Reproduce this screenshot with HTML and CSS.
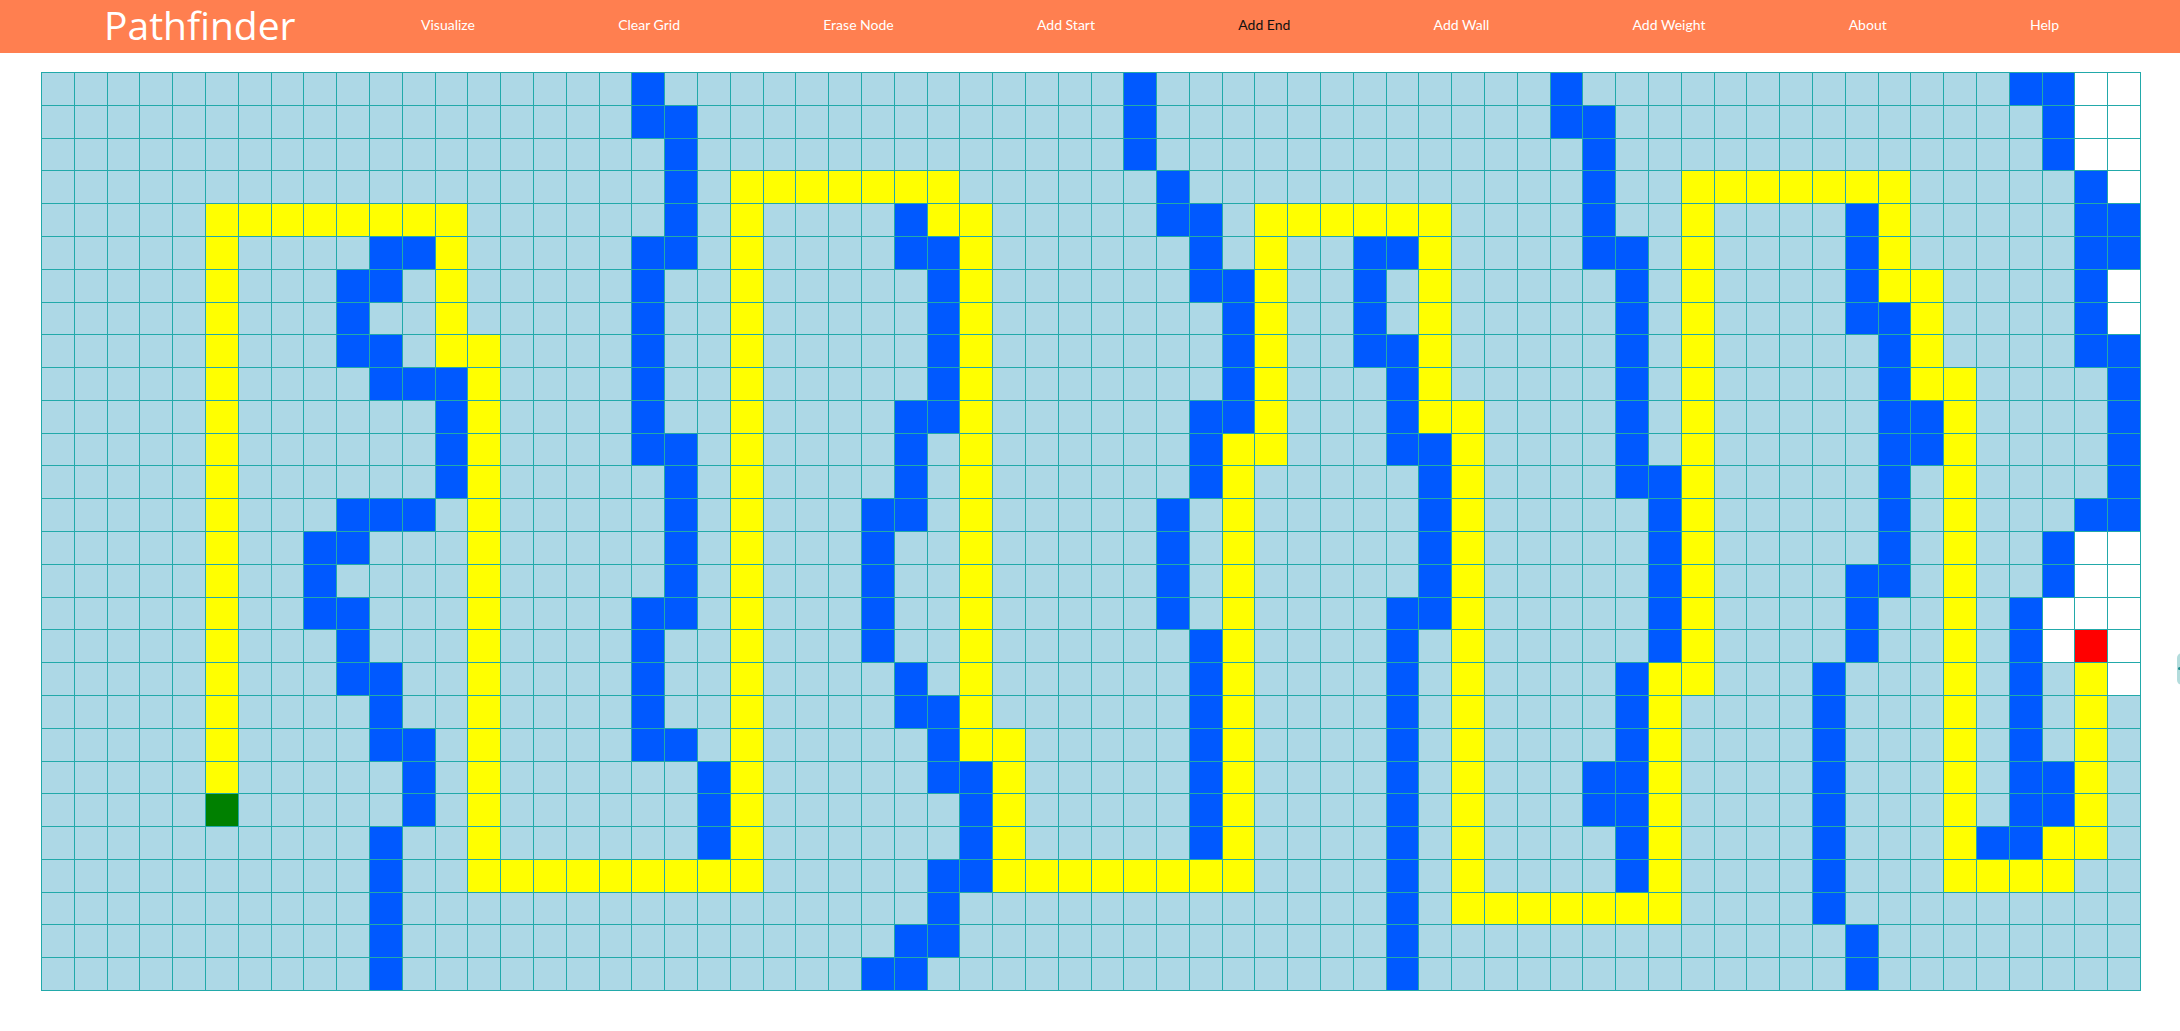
FILE: index.html
```html
<!DOCTYPE html>
<html lang="en">
<head>
<meta charset="utf-8">
<title>Pathfinder</title>
<link rel="stylesheet" href="styles.css">
</head>
<body>
<nav class="navbar">
  <div class="brand">Pathfinder</div>
  <ul class="nav-links">
    <li><a class="nav-link">Visualize</a></li>
    <li><a class="nav-link">Clear Grid</a></li>
    <li><a class="nav-link">Erase Node</a></li>
    <li><a class="nav-link">Add Start</a></li>
    <li><a class="nav-link active">Add End</a></li>
    <li><a class="nav-link">Add Wall</a></li>
    <li><a class="nav-link">Add Weight</a></li>
    <li><a class="nav-link">About</a></li>
    <li><a class="nav-link">Help</a></li>
  </ul>
</nav>
<main class="board">
  <div id="grid" class="grid"></div>
</main>
<div class="side-tab"><span class="side-dot"></span></div>
<script src="script.js"></script>
</body>
</html>
```

FILE: styles.css
```css
html, body {
  margin: 0;
  padding: 0;
  background: #ffffff;
  overflow: hidden;
}

body {
  font-family: "Lato", "Open Sans", sans-serif;
}

.navbar {
  display: flex;
  align-items: flex-start;
  height: 53px;
  background: #ff7f50;
}

.brand {
  margin-left: 104px;
  font-family: "Open Sans", sans-serif;
  font-weight: 400;
  font-size: 39px;
  line-height: 49px;
  color: #ffffff;
  white-space: nowrap;
}

.nav-links {
  display: flex;
  justify-content: space-between;
  width: 1638px;
  margin: 0 121px 0 auto;
  padding: 0;
  list-style: none;
}

.nav-link {
  display: block;
  font-family: "Lato", sans-serif;
  font-size: 14px;
  line-height: 49px;
  color: #ffffff;
  white-space: nowrap;
  cursor: pointer;
}

.nav-link.active {
  color: #111111;
}

.board {
  padding: 19px 0 0 41px;
}

.grid {
  box-sizing: border-box;
  display: grid;
  grid-template-columns: repeat(64, 1fr);
  grid-template-rows: repeat(28, 1fr);
  gap: 1px;
  padding: 1px;
  width: 2100px;
  height: 919px;
  background: #22a9aa;
}

.cell {
  background: #add8e6;
}

.cell.wall {
  background: #0059ff;
}

.cell.path {
  background: #ffff00;
}

.cell.unvisited {
  background: #ffffff;
  box-shadow: 0 0 0 1px #22a9aa;
}

.cell.start {
  background: #008000;
}

.cell.end {
  background: #ff0000;
}

.side-tab {
  position: absolute;
  left: 2177px;
  top: 653px;
  width: 14px;
  height: 32px;
  border-radius: 5px;
  background: #b3dcdc;
}

.side-dot {
  position: absolute;
  left: 1px;
  top: 14px;
  width: 3px;
  height: 3px;
  border-radius: 50%;
  background: #1b8a8a;
}
```

FILE: script.js
```js
var rows = [
  "b18,33,46,60-61 w62-63",
  "b18-19,33,46-47,61 w62-63",
  "b19,33,47,61 w62-63",
  "b19,34,47,62 y21-27,50-56 w63",
  "y5-12,21,27-28,37-42,50,56 b19,26,34-35,47,55,62-63",
  "y5,12,21,28,37,42,50,56 b10-11,18-19,26-27,35,40-41,47-48,55,62-63",
  "y5,12,21,28,37,42,50,56-57 b9-10,18,27,35-36,40,48,55,62 w63",
  "y5,12,21,28,37,42,50,57 b9,18,27,36,40,48,55-56,62 w63",
  "y5,12-13,21,28,37,42,50,57 b9-10,18,27,36,40-41,48,56,62-63",
  "y5,13,21,28,37,42,50,57-58 b10-12,18,27,36,41,48,56,63",
  "y5,13,21,28,37,42-43,50,58 b12,18,26-27,35-36,41,48,56-57,63",
  "y5,13,21,28,36-37,43,50,58 b12,18-19,26,35,41-42,48,56-57,63",
  "y5,13,21,28,36,43,50,58 b12,19,26,35,42,48-49,56,63",
  "y5,13,21,28,36,43,50,58 b9-11,19,25-26,34,42,49,56,62-63",
  "y5,13,21,28,36,43,50,58 b8-9,19,25,34,42,49,56,61 w62-63",
  "y5,13,21,28,36,43,50,58 b8,19,25,34,42,49,55-56,61 w62-63",
  "y5,13,21,28,36,43,50,58 b8-9,18-19,25,34,41-42,49,55,60 w61-63",
  "y5,13,21,28,36,43,50,58 b9,18,25,35,41,49,55,60 w61,63 r62",
  "y5,13,21,28,36,43,49-50,58,62 b9-10,18,26,35,41,48,54,60 w63",
  "y5,13,21,28,36,43,49,58,62 b10,18,26-27,35,41,48,54,60",
  "y5,13,21,28-29,36,43,49,58,62 b10-11,18-19,27,35,41,48,54,60",
  "y5,13,21,29,36,43,49,58,62 b11,20,27-28,35,41,47-48,54,60-61",
  "g5 y13,21,29,36,43,49,58,62 b11,20,28,35,41,47-48,54,60-61",
  "y13,21,29,36,43,49,58,61-62 b10,20,28,35,41,48,54,59-60",
  "y13-21,29-36,43,49,58-61 b10,27-28,41,48,54",
  "y43-49 b10,27,41,54",
  "b10,26-27,41,55",
  "b10,25-26,41,55"
];

var names = { b: "wall", y: "path", w: "unvisited", g: "start", r: "end" };
var COLS = 64;
var grid = document.getElementById("grid");
var frag = document.createDocumentFragment();

rows.forEach(function (spec) {
  var row = new Array(COLS).fill("");
  spec.split(" ").forEach(function (tok) {
    if (!tok) return;
    var kind = names[tok.charAt(0)];
    tok.slice(1).split(",").forEach(function (part) {
      var ab = part.split("-");
      var a = parseInt(ab[0], 10);
      var b = ab.length > 1 ? parseInt(ab[1], 10) : a;
      for (var c = a; c <= b; c++) row[c] = kind;
    });
  });
  row.forEach(function (kind) {
    var d = document.createElement("div");
    d.className = kind ? "cell " + kind : "cell";
    frag.appendChild(d);
  });
});

grid.appendChild(frag);
```
